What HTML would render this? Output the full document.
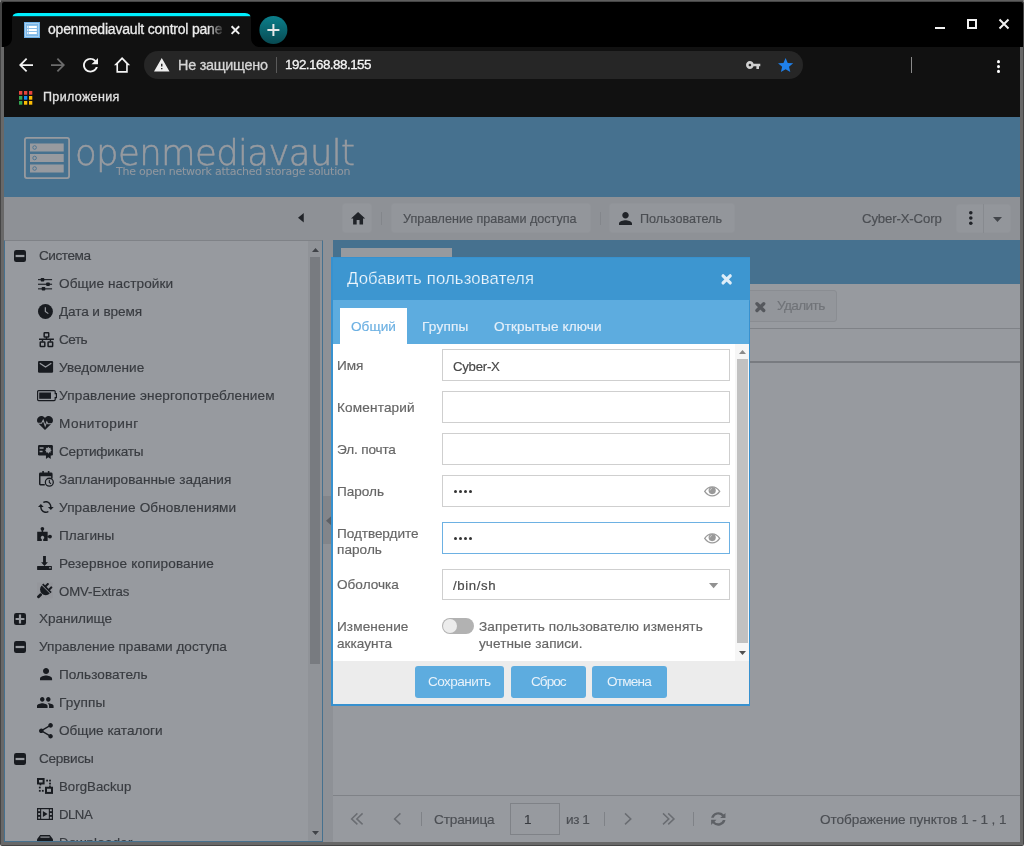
<!DOCTYPE html>
<html lang="ru"><head><meta charset="utf-8"><title>openmediavault control panel</title>
<style>
html,body{margin:0;padding:0;}
body{width:1024px;height:846px;overflow:hidden;position:relative;background:#fff;font-family:"Liberation Sans","DejaVu Sans",sans-serif;font-size:13.6px;color:#404040;}
div{position:absolute;box-sizing:border-box;}
svg{position:absolute;display:block;overflow:visible;}
.t{white-space:nowrap;line-height:20px;height:20px;will-change:transform;-webkit-text-stroke:.18px currentColor;}
.ch{-webkit-text-stroke:.3px currentColor;}
.ml{white-space:nowrap;}

</style></head>
<body>
<div style="left:0px;top:0px;width:1024px;height:846px;background:#454545;border-radius:3px 3px 2px 2px;"></div>
<div style="left:0px;top:0px;width:1024px;height:1px;background:#5e5e5e;border-radius:3px 3px 0 0;"></div>
<div style="left:1px;top:47px;width:1022px;height:798px;background:#686868;"></div>
<div style="left:2px;top:2px;width:1021px;height:45px;background:#000;border-radius:2px 2px 0 0;"></div>
<div style="left:4px;top:47px;width:1016px;height:70px;background:#111;"></div>
<svg style="left:0;top:0" width="300" height="48" viewBox="0 0 300 48"><defs><clipPath id="tabclip"><path d="M3 47 C8 47 12 43.500 12 38 L12 19 Q12 13 18 13 L245 13 Q251 13 251 19 L251 38 C251 43.500 255 47 260 47 Z"/></clipPath><linearGradient id="ntb" x1="0" y1="0" x2="0" y2="1"><stop offset="0" stop-color="#0b7f8b"/><stop offset="1" stop-color="#084a52"/></linearGradient></defs><g clip-path="url(#tabclip)"><rect x="0" y="13" width="300" height="35" fill="#111"/><rect x="0" y="12" width="300" height="4.200" fill="#00f0ff"/></g><circle cx="273.400" cy="30" r="14" fill="url(#ntb)"/><path d="M267.400 30h12M273.400 24v12" stroke="#e8e8e8" stroke-width="2" fill="none"/><path d="M231.600 26.300l7.600 7.600M239.200 26.300l-7.600 7.600" stroke="#f0f0f0" stroke-width="2" fill="none"/></svg>
<svg style="left:24px;top:22px" width="16" height="16" viewBox="0 0 16 16"><rect width="16" height="16" fill="#6eb0e6"/><rect x="1.500" y="1.500" width="13" height="13" fill="none" stroke="#a8d0f0" stroke-width="1"/><rect x="2.500" y="2.500" width="11" height="11" fill="#8cc0ea"/><rect x="3.300" y="4" width="9.500" height="2" fill="#fff"/><rect x="3.300" y="7" width="9.500" height="2" fill="#fff"/><rect x="3.300" y="10" width="9.500" height="2" fill="#fff"/><rect x="4.300" y="4" width=".7" height="2" fill="#8cc0ea"/><rect x="4.300" y="7" width=".7" height="2" fill="#8cc0ea"/><rect x="4.300" y="10" width=".7" height="2" fill="#8cc0ea"/></svg>
<div class="t ch" style="left:48px;top:19.200px;width:174.300px;overflow:hidden;color:#ececec;font-size:14px;letter-spacing:-0.204px;-webkit-mask-image:linear-gradient(to right,#000 160px,transparent 177px);mask-image:linear-gradient(to right,#000 160px,transparent 177px);">openmediavault control panel</div>
<div style="left:935px;top:27px;width:10px;height:2px;background:#f2f2f2;"></div>
<div style="left:967px;top:19px;width:10px;height:10px;border:2px solid #f2f2f2;"></div>
<svg style="left:999px;top:19px" width="10" height="10" viewBox="0 0 10 10"><path d="M.5 .5l9 9M9.500 .5l-9 9" stroke="#f2f2f2" stroke-width="2" fill="none"/></svg>
<svg style="left:19px;top:58px;color:#f4f4f4;" width="14" height="14" viewBox="4 4 16 16" preserveAspectRatio="none" fill="currentColor"><path d="M20 11H7.83l5.59-5.59L12 4l-8 8 8 8 1.41-1.41L7.83 13H20v-2z"/></svg>
<svg style="left:51px;top:58px;color:#6c6c6c;" width="14" height="14" viewBox="4 4 16 16" preserveAspectRatio="none" fill="currentColor"><path d="M12 4l-1.41 1.41L16.17 11H4v2h12.17l-5.58 5.59L12 20l8-8z"/></svg>
<svg style="left:82.5px;top:57.5px;color:#f4f4f4;" width="15" height="14.5" viewBox="4 4 16 16" preserveAspectRatio="none" fill="currentColor"><path d="M17.65 6.35C16.2 4.9 14.21 4 12 4c-4.42 0-7.99 3.58-7.99 8s3.57 8 7.99 8c3.73 0 6.84-2.55 7.73-6h-2.08c-.82 2.33-3.04 4-5.65 4-3.31 0-6-2.69-6-6s2.69-6 6-6c1.66 0 3.14.69 4.22 1.78L13 11h7V4l-2.35 2.35z"/></svg>
<svg style="left:113.8px;top:57px;color:#f4f4f4;" width="16.2" height="15.8" viewBox="2 3 20 17" preserveAspectRatio="none" fill="currentColor"><path d="M12 5.69l5 4.5V18H7v-7.81l5-4.5M12 3L2 12h3v8h14v-8h3L12 3z"/></svg>
<div style="left:144px;top:51px;width:659px;height:28px;background:#262626;border-radius:14px;"></div>
<svg style="left:154px;top:58px;color:#eee;" width="15.5" height="13.5" viewBox="1 2 22 19" preserveAspectRatio="none" fill="currentColor"><path d="M1 21h22L12 2 1 21zm12-3h-2v-2h2v2zm0-4h-2v-4h2v4z"/></svg>
<div class="t ch" style="left:178px;top:55px;color:#d6d6d6;"><span style="font-size:14.4px;letter-spacing:-0.256px;">Не защищено</span></div>
<div style="left:275.5px;top:57px;width:1px;height:16px;background:#5a5a5a;"></div>
<div class="t ch" style="left:285px;top:55px;color:#f6f6f6;"><span style="font-size:13.4px;letter-spacing:-0.507px;">192.168.88.155</span></div>
<svg style="left:746.4px;top:60.5px;color:#d0d0d0;" width="14.3" height="8" viewBox="1 6 22 12" preserveAspectRatio="none" fill="currentColor"><path d="M12.65 10C11.83 7.67 9.61 6 7 6c-3.31 0-6 2.69-6 6s2.69 6 6 6c2.61 0 4.83-1.67 5.65-4H17v4h4v-4h2v-4H12.65zM7 14c-1.1 0-2-.9-2-2s.9-2 2-2 2 .9 2 2-.9 2-2 2z"/></svg>
<svg style="left:778px;top:58px;color:#1f80ea;" width="15.2" height="14" viewBox="2 2 20 19" preserveAspectRatio="none" fill="currentColor"><path d="M12 17.27L18.18 21l-1.64-7.03L22 9.24l-7.19-.61L12 2 9.19 8.63 2 9.24l5.46 4.73L5.82 21z"/></svg>
<div style="left:911px;top:57px;width:1px;height:16px;background:#8a8a8a;"></div>
<svg style="left:997px;top:60px;color:#fff;" width="3" height="13" viewBox="10 4 4 16" preserveAspectRatio="none" fill="currentColor"><circle cx="12" cy="6" r="2"/><circle cx="12" cy="12" r="2"/><circle cx="12" cy="18" r="2"/></svg>
<svg style="left:19px;top:91px" width="13.300" height="13.700" viewBox="0 0 13.300 13.700"><rect x="0" y="0" width="3.300" height="3.700" fill="#e8453c"/><rect x="5" y="0" width="3.300" height="3.700" fill="#e8453c"/><rect x="10" y="0" width="3.300" height="3.700" fill="#e8453c"/><rect x="0" y="5" width="3.300" height="3.700" fill="#34a853"/><rect x="5" y="5" width="3.300" height="3.700" fill="#1a8cf0"/><rect x="10" y="5" width="3.300" height="3.700" fill="#fbbc05"/><rect x="0" y="10" width="3.300" height="3.700" fill="#34a853"/><rect x="5" y="10" width="3.300" height="3.700" fill="#fbbc05"/><rect x="10" y="10" width="3.300" height="3.700" fill="#fbbc05"/></svg>
<div class="t ch" style="left:42.6px;top:87px;color:#e0e0e0;"><span style="font-size:12.5px;letter-spacing:0.346px;">Приложения</span></div><div style="left:4px;top:117px;width:1016px;height:80px;background:#5dacdf;"></div>
<svg style="left:24px;top:136.500px" width="46" height="42" viewBox="0 0 46 42"><rect x=".9" y=".9" width="44.200" height="40.200" rx="2" fill="none" stroke="#fff" stroke-width="1.800"/><rect x="6" y="6.5" width="33.700" height="8" fill="#fff"/><circle cx="10.600" cy="10.5" r="1.800" fill="none" stroke="#5dacdf" stroke-width=".9"/><rect x="6" y="17" width="33.700" height="8" fill="#fff"/><circle cx="10.600" cy="21" r="1.800" fill="none" stroke="#5dacdf" stroke-width=".9"/><rect x="6" y="27.5" width="33.700" height="8" fill="#fff"/><circle cx="10.600" cy="31.5" r="1.800" fill="none" stroke="#5dacdf" stroke-width=".9"/></svg>
<div class="t" style="left:74.800px;top:117.500px;height:70px;line-height:70px;font-family:'DejaVu Sans Light','DejaVu Sans',sans-serif;font-weight:200;font-size:35.500px;color:#fff;letter-spacing:-.64px;-webkit-text-stroke:.45px #fff;">openmediavault</div>
<div class="t" style="left:116px;top:161.500px;font-family:'DejaVu Sans',sans-serif;font-size:11px;letter-spacing:-.24px;color:#fff;opacity:.92;-webkit-text-stroke:0;">The open network attached storage solution</div>
<div style="left:4px;top:197px;width:1016px;height:645px;background:#ececec;"></div>
<svg style="left:298px;top:213px" width="5.800" height="9.600" viewBox="0 0 6 10"><path d="M6 0v10L0 5z" fill="#111"/></svg>
<div style="left:4px;top:240px;width:319px;height:602px;background:#fff;border:1px solid #5dacdf;border-top:1px solid #cfcfcf;"></div>
<div style="left:308px;top:241px;width:14px;height:600px;background:#f1f1f1;"></div>
<div style="left:309.5px;top:256.5px;width:10.5px;height:407px;background:#c1c1c1;"></div>
<svg style="left:311.500px;top:247.500px" width="7" height="4" viewBox="0 0 7 4"><path d="M0 4h7L3.500 0z" fill="#505050"/></svg>
<svg style="left:311.500px;top:830.500px" width="7" height="4" viewBox="0 0 7 4"><path d="M0 0h7L3.500 4z" fill="#505050"/></svg>
<div style="left:4px;top:241px;width:304px;height:600px;overflow:hidden;left:4px;"><div style="left:-4px;top:-241px;width:340px;height:900px"><svg style="left:14.100px;top:249.6px" width="12" height="12" viewBox="0 0 12 12"><rect width="12" height="12" rx="2.200" fill="#000"/><rect x="1.600" y="4.900" width="8.800" height="2.200" fill="#fff"/></svg><div class="t" style="left:39.4px;top:246px;"><span style="font-size:13.6px;letter-spacing:-0.464px;">Система</span></div><svg style="left:37.9px;top:277.9px;color:#000;" width="14.1" height="12.5" viewBox="0 0 14.100 12.500" preserveAspectRatio="none" fill="currentColor"><rect x="0" y="1.100" width="14.100" height="1.100"/><rect x="0" y="5.700" width="14.100" height="1.100"/><rect x="0" y="10.300" width="14.100" height="1.100"/><rect x="2.700" y="0" width="3.600" height="3.400" rx=".7"/><rect x="8.200" y="4.550" width="3.600" height="3.400" rx=".7"/><rect x="3.700" y="9.100" width="3.600" height="3.400" rx=".7"/></svg><div class="t" style="left:59.3px;top:274px;"><span style="font-size:13.6px;letter-spacing:0.091px;">Общие настройки</span></div><svg style="left:38.1px;top:304px;color:#000;" width="14.9" height="14.9" viewBox="0 0 15 15" preserveAspectRatio="none" fill="currentColor"><circle cx="7.500" cy="7.500" r="7.500"/><path d="M7.400 3.200v4.400l3 2.100" fill="none" stroke="#fff" stroke-width="1.200"/></svg><div class="t" style="left:59.3px;top:302px;"><span style="font-size:13.6px;letter-spacing:-0.109px;">Дата и время</span></div><svg style="left:38.9px;top:332.1px;color:#000;" width="14.9" height="15.2" viewBox="0 0 15 15.200" preserveAspectRatio="none" fill="currentColor"><rect x="5.200" y=".75" width="4.600" height="4.200" rx=".5" fill="none" stroke="currentColor" stroke-width="1.500"/><rect x="6.800" y="5" width="1.400" height="2"/><rect x="0" y="6.500" width="15" height="1.500"/><rect x="2.800" y="8" width="1.400" height="1.600"/><rect x="10.800" y="8" width="1.400" height="1.600"/><rect x="1.250" y="10.100" width="4.600" height="4.300" rx=".5" fill="none" stroke="currentColor" stroke-width="1.500"/><rect x="9.150" y="10.100" width="4.600" height="4.300" rx=".5" fill="none" stroke="currentColor" stroke-width="1.500"/></svg><div class="t" style="left:59.3px;top:330px;"><span style="font-size:13.6px;letter-spacing:-0.509px;">Сеть</span></div><svg style="left:38.4px;top:361.1px;color:#000;" width="15.1" height="11.8" viewBox="0 0 15.100 11.800" preserveAspectRatio="none" fill="currentColor"><rect width="15.100" height="11.800" rx="1.200"/><path d="M1.800 2.300l5.750 3.700 5.750-3.700" fill="none" stroke="#fff" stroke-width="1.300"/></svg><div class="t" style="left:59.3px;top:358px;"><span style="font-size:13.6px;letter-spacing:0.009px;">Уведомление</span></div><svg style="left:37px;top:389.7px;color:#000;" width="20" height="11.2" viewBox="0 0 20 11.200" preserveAspectRatio="none" fill="currentColor"><path d="M1.600 .6h15.600a1 1 0 0 1 1 1v2h1.200v4h-1.200v2a1 1 0 0 1-1 1H1.600a1 1 0 0 1-1-1v-8a1 1 0 0 1 1-1z" fill="none" stroke="currentColor" stroke-width="1.200"/><rect x="2.200" y="2.500" width="11.800" height="6.300"/></svg><div class="t" style="left:59.3px;top:386px;"><span style="font-size:13.6px;letter-spacing:0.144px;">Управление энергопотреблением</span></div><svg style="left:37px;top:416px;color:#000;" width="16" height="14" viewBox="0 0 16 14" preserveAspectRatio="none" fill="currentColor"><path d="M8 14L1.100 7.300C-.6 5.400-.3 2.300 1.700 .9 3.700-.5 6.400 0 8 2 9.600 0 12.300-.5 14.300 .9c2 1.400 2.300 4.500.6 6.400z"/><path d="M0 7.300h4.600l1.600-3.200 2 5.800 1.600-4 .9 1.900H16" fill="none" stroke="#fff" stroke-width="1.050"/></svg><div class="t" style="left:59.3px;top:414px;"><span style="font-size:13.6px;letter-spacing:0.431px;">Мониторинг</span></div><svg style="left:38.4px;top:444.5px;color:#000;" width="14.9" height="13.9" viewBox="0 0 15 14" preserveAspectRatio="none" fill="currentColor"><rect width="15" height="10.600" rx="1.200"/><rect x="1.600" y="2.300" width="4" height="1.500" fill="#fff"/><rect x="1.600" y="5.800" width="3" height="1.500" fill="#fff"/><path d="M8 10v4l2.400-1.600 2.400 1.600v-4z"/><path d="M10.40 1.70L11.28 3.08L12.87 2.73L12.52 4.32L13.90 5.20L12.52 6.08L12.87 7.67L11.28 7.32L10.40 8.70L9.52 7.32L7.93 7.67L8.28 6.08L6.90 5.20L8.28 4.32L7.93 2.73L9.52 3.08z" fill="#fff"/></svg><div class="t" style="left:59.3px;top:442px;"><span style="font-size:13.6px;letter-spacing:-0.223px;">Сертификаты</span></div><svg style="left:39.1px;top:471.3px;color:#000;" width="14.9" height="15.9" viewBox="0 0 15 16" preserveAspectRatio="none" fill="currentColor"><path d="M3.300 0h1.600v1.600h4V0h1.600v1.600h1.700a1.500 1.500 0 0 1 1.500 1.500v4.500h-1.500V5.400H1.500v7.700h4.300v1.500H1.500A1.500 1.500 0 0 1 0 13.100v-10a1.500 1.500 0 0 1 1.500-1.500h1.800z"/><circle cx="10.400" cy="11.300" r="4" fill="none" stroke="currentColor" stroke-width="1.300"/><path d="M10.400 8.800v2.700l1.700 1.300" fill="none" stroke="currentColor" stroke-width="1.100"/></svg><div class="t" style="left:59.3px;top:470px;"><span style="font-size:13.6px;letter-spacing:0.042px;">Запланированные задания</span></div><svg style="left:38.1px;top:501px;color:#000;" width="15.7" height="12" viewBox="1 4 22 16" preserveAspectRatio="none" fill="currentColor"><g transform="translate(0 24) scale(1 -1)"><path d="M19 8l-4 4h3c0 3.310-2.690 6-6 6-1.010 0-1.970-.25-2.800-.7l-1.460 1.460C8.970 19.540 10.430 20 12 20c4.420 0 8-3.580 8-8h3l-4-4zM6 12c0-3.310 2.690-6 6-6 1.010 0 1.970.25 2.800.7l1.460-1.460C15.030 4.460 13.570 4 12 4c-4.420 0-8 3.580-8 8H1l4 4 4-4H6z"/></g></svg><div class="t" style="left:59.3px;top:498px;"><span style="font-size:13.6px;letter-spacing:0.118px;">Управление Обновлениями</span></div><svg style="left:37.1px;top:527px;color:#000;" width="14.9" height="13.9" viewBox="0 0 14.900 13.900" preserveAspectRatio="none" fill="currentColor"><path d="M.2 4.800H10.650V13.900H6.200V12.200A1.700 1.700 0 1 0 4.800 12.200V13.900H.2z"/><circle cx="5.400" cy="1.800" r="1.850"/><rect x="4.650" y="2.500" width="1.500" height="2.600"/><circle cx="13" cy="9.600" r="1.900"/><rect x="10.400" y="8.800" width="2" height="1.600"/></svg><div class="t" style="left:59.3px;top:526px;"><span style="font-size:13.6px;letter-spacing:0.044px;">Плагины</span></div><svg style="left:37px;top:555.8px;color:#000;" width="15" height="13.9" viewBox="0 0 15 13.900" preserveAspectRatio="none" fill="currentColor"><path d="M6.070 0h2.830v6.300h2L7.500 9.950 4.100 6.300h1.970z"/><rect x=".1" y="10.100" width="14.800" height="3.800" rx=".3"/><rect x="12" y="11.200" width="2" height="1.200" fill="#fff" opacity=".85"/></svg><div class="t" style="left:59.3px;top:554px;"><span style="font-size:13.6px;letter-spacing:0.162px;">Резервное копирование</span></div><svg style="left:37.1px;top:582.6px;color:#000;" width="15.9" height="15.4" viewBox="0 0 15.900 15.400" preserveAspectRatio="none" fill="currentColor"><rect x="0" y="-.6" width="16" height="16" fill="#c8b8b8" opacity=".13"/><g transform="translate(9.900 5.400) rotate(45)"><rect x="-5.900" y="-.9" width="11.800" height="1.800"/><rect x="-3.400" y="-4.700" width="2" height="4.400" rx=".6"/><rect x="1.400" y="-4.700" width="2" height="4.400" rx=".6"/><path d="M-5.700 1.600H5.700A5.700 5.700 0 0 1-5.700 1.600z"/><rect x="-1.400" y="7.600" width="2.800" height="5.600" rx="1"/></g></svg><div class="t" style="left:59.3px;top:582px;"><span style="font-size:13.2px;letter-spacing:-0.068px;">OMV-Extras</span></div><svg style="left:14.100px;top:612.6px" width="12" height="12" viewBox="0 0 12 12"><rect width="12" height="12" rx="2.200" fill="#000"/><path d="M1.600 4.900h3.300V1.600h2.200v3.300h3.300v2.200H7.100v3.300H4.900V7.100H1.600z" fill="#fff"/></svg><div class="t" style="left:39.4px;top:609px;"><span style="font-size:13.6px;letter-spacing:-0.045px;">Хранилище</span></div><svg style="left:14.100px;top:640.6px" width="12" height="12" viewBox="0 0 12 12"><rect width="12" height="12" rx="2.200" fill="#000"/><rect x="1.600" y="4.900" width="8.800" height="2.200" fill="#fff"/></svg><div class="t" style="left:39.4px;top:637px;"><span style="font-size:13.6px;letter-spacing:0.013px;">Управление правами доступа</span></div><svg style="left:39.9px;top:668.3px;color:#000;" width="12.1" height="12.2" viewBox="4 4 16 16" preserveAspectRatio="none" fill="currentColor"><path d="M12 12c2.21 0 4-1.79 4-4s-1.79-4-4-4-4 1.79-4 4 1.79 4 4 4zm0 2c-2.67 0-8 1.34-8 4v2h16v-2c0-2.66-5.33-4-8-4z"/></svg><div class="t" style="left:59.3px;top:665px;"><span style="font-size:13.6px;letter-spacing:0.032px;">Пользователь</span></div><svg style="left:37.4px;top:697.0999999999999px;color:#000;" width="16.6" height="10.9" viewBox="1 5 22 14" preserveAspectRatio="none" fill="currentColor"><path d="M16 11c1.66 0 2.99-1.34 2.99-3S17.66 5 16 5c-1.66 0-3 1.34-3 3s1.34 3 3 3zm-8 0c1.66 0 2.99-1.34 2.99-3S9.66 5 8 5C6.34 5 5 6.34 5 8s1.34 3 3 3zm0 2c-2.33 0-7 1.17-7 3.5V19h14v-2.500c0-2.33-4.67-3.5-7-3.5zm8 0c-.29 0-.62.02-.97.05 1.16.84 1.97 1.97 1.97 3.45V19h6v-2.5c0-2.33-4.67-3.5-7-3.5z"/></svg><div class="t" style="left:59.3px;top:693px;"><span style="font-size:13.6px;letter-spacing:0.201px;">Группы</span></div><svg style="left:39.1px;top:722.5999999999999px;color:#000;" width="13.9" height="15.5" viewBox="3 2 18 20" preserveAspectRatio="none" fill="currentColor"><path d="M18 16.08c-.76 0-1.44.3-1.96.77L8.910 12.7c.05-.23.09-.46.09-.7s-.04-.47-.09-.7l7.05-4.110c.54.5 1.25.81 2.040.81 1.660 0 3-1.340 3-3s-1.340-3-3-3-3 1.340-3 3c0 .24.040.47.090.7L8.040 9.810C7.500 9.310 6.790 9 6 9c-1.660 0-3 1.340-3 3s1.340 3 3 3c.79 0 1.500-.31 2.040-.81l7.120 4.160c-.05.21-.08.43-.08.65 0 1.610 1.310 2.920 2.920 2.920 1.610 0 2.920-1.310 2.920-2.920s-1.310-2.920-2.920-2.920z"/></svg><div class="t" style="left:59.3px;top:721px;"><span style="font-size:13.6px;letter-spacing:-0.015px;">Общие каталоги</span></div><svg style="left:14.100px;top:752.6px" width="12" height="12" viewBox="0 0 12 12"><rect width="12" height="12" rx="2.200" fill="#000"/><rect x="1.600" y="4.900" width="8.800" height="2.200" fill="#fff"/></svg><div class="t" style="left:39.4px;top:749px;"><span style="font-size:13.6px;letter-spacing:-0.275px;">Сервисы</span></div><svg style="left:37px;top:777.9px;color:#000;" width="16" height="15.9" viewBox="0 0 16 16" preserveAspectRatio="none" fill="currentColor"><rect x="1" y="1" width="5.600" height="4.500" fill="none" stroke="currentColor" stroke-width="2"/><rect x="2.600" y="6" width="1.700" height="1.400"/><rect x="9" y="9.800" width="6" height="5.200" fill="none" stroke="currentColor" stroke-width="2"/><rect x="12.100" y="7.600" width="1.700" height="1.400"/><rect x="9.200" y="1.700" width="1.800" height="1.800"/><rect x="12.100" y="1.700" width="1.800" height="1.800"/><rect x="12.100" y="4.700" width="1.800" height="1.800"/><rect x="1.900" y="8.700" width="1.800" height="1.800"/><rect x="1.900" y="12" width="1.800" height="1.800"/><rect x="4.900" y="12" width="1.800" height="1.800"/></svg><div class="t" style="left:59.3px;top:777px;"><span style="font-size:13.2px;letter-spacing:0.056px;">BorgBackup</span></div><svg style="left:37px;top:807.8px;color:#000;" width="16" height="12" viewBox="0 0 16 12" preserveAspectRatio="none" fill="currentColor"><rect x=".6" y=".6" width="14.800" height="10.800" fill="none" stroke="currentColor" stroke-width="1.200"/><rect x="0" y="0" width="4.200" height="12"/><rect x="11.800" y="0" width="4.200" height="12"/><rect x="1.2" y="1.3" width="1.900" height="1.900" fill="#fff"/><rect x="1.2" y="5.05" width="1.900" height="1.900" fill="#fff"/><rect x="1.2" y="8.8" width="1.900" height="1.900" fill="#fff"/><rect x="12.9" y="1.3" width="1.900" height="1.900" fill="#fff"/><rect x="12.9" y="5.05" width="1.900" height="1.900" fill="#fff"/><rect x="12.9" y="8.8" width="1.900" height="1.900" fill="#fff"/><path d="M5.900 3v6L10.600 6z"/></svg><div class="t" style="left:59.3px;top:805px;"><span style="font-size:13.2px;letter-spacing:-0.497px;">DLNA</span></div><svg style="left:37px;top:834.6999999999999px;color:#000;" width="16" height="14" viewBox="0 0 16 12" preserveAspectRatio="none" fill="currentColor"><path d="M3.200 0h9.600L16 3.600V12H0V3.600z"/><rect x="3.400" y="1.300" width="9.200" height="1" fill="#fff"/><rect x="5" y="5.600" width="6" height="2" fill="#fff"/></svg><div class="t" style="left:59.3px;top:833px;"><span style="font-size:13.2px;letter-spacing:0.333px;">Downloader</span></div></div></div>
<div style="left:342px;top:203.3px;width:30px;height:29.8px;background:#f7f7f7;border:1px solid #f2f2f2;border-radius:3px;"></div>
<svg style="left:351.4px;top:212.3px;color:#111;" width="14.2" height="12.4" viewBox="2 3 20 17" preserveAspectRatio="none" fill="currentColor"><path d="M10 20v-6h4v6h5v-8h3L12 3 2 12h3v8z"/></svg>
<div style="left:381px;top:211.5px;width:1px;height:13.5px;background:#d6d6d6;"></div>
<div style="left:391px;top:203.3px;width:199.5px;height:29.8px;background:#f7f7f7;border:1px solid #f2f2f2;border-radius:3px;"></div>
<div class="t" style="left:403.3px;top:208.5px;color:#666;"><span style="font-size:12.6px;letter-spacing:-0.01px;">Управление правами доступа</span></div>
<div style="left:599.5px;top:211.5px;width:1px;height:13.5px;background:#d6d6d6;"></div>
<div style="left:609px;top:203.3px;width:126px;height:29.8px;background:#f7f7f7;border:1px solid #f2f2f2;border-radius:3px;"></div>
<svg style="left:618.5px;top:212px;color:#111;" width="13" height="13" viewBox="4 4 16 16" preserveAspectRatio="none" fill="currentColor"><path d="M12 12c2.21 0 4-1.79 4-4s-1.79-4-4-4-4 1.79-4 4 1.79 4 4 4zm0 2c-2.67 0-8 1.34-8 4v2h16v-2c0-2.66-5.33-4-8-4z"/></svg>
<div class="t" style="left:640px;top:208.5px;color:#666;"><span style="font-size:12.6px;letter-spacing:0.022px;">Пользователь</span></div>
<div class="t" style="left:862.4px;top:209.3px;color:#666;"><span style="font-size:13.2px;letter-spacing:-0.145px;">Cyber-X-Corp</span></div>
<div style="left:956px;top:203.5px;width:55px;height:29.5px;background:#f7f7f7;border:1px solid #f2f2f2;border-radius:3px;"></div>
<div style="left:983px;top:204px;width:1px;height:28.5px;background:#dedede;"></div>
<svg style="left:969.3px;top:211.3px;color:#111;" width="3.6" height="14" viewBox="10 4 4 16" preserveAspectRatio="none" fill="currentColor"><circle cx="12" cy="6" r="2"/><circle cx="12" cy="12" r="2"/><circle cx="12" cy="18" r="2"/></svg>
<svg style="left:993px;top:216.500px" width="9" height="5" viewBox="0 0 9 5"><path d="M0 0h9L4.500 5z" fill="#555"/></svg>
<div style="left:323.4px;top:496px;width:9.6px;height:48px;background:#d4d4d4;"></div>
<svg style="left:326px;top:515.500px" width="5.500" height="9.400" viewBox="0 0 5.500 9.400"><path d="M5.500 0v9.400L0 4.700z" fill="#8a8a8a"/></svg>
<div style="left:333px;top:240px;width:687px;height:602px;background:#fff;"></div>
<div style="left:333px;top:240px;width:687px;height:44px;background:#5dacdf;"></div>
<div style="left:341px;top:248px;width:111px;height:36px;background:#fff;"></div>
<div style="left:333px;top:328px;width:687px;height:1px;background:#cfcfcf;"></div>
<div style="left:700px;top:290px;width:136.5px;height:31.5px;background:#f6f6f6;border:1px solid #e4e4e4;border-radius:3px;"></div>
<svg style="left:755.200px;top:302px" width="10.700" height="10.200" viewBox="0 0 10 10"><path d="M1.700 1.700l6.600 6.600M8.300 1.700l-6.600 6.600" stroke="#7a7a7a" stroke-width="3.300" stroke-linecap="round" fill="none"/></svg>
<div class="t" style="left:776.5px;top:296px;color:#b0b0b0;"><span style="font-size:13.6px;letter-spacing:-0.615px;">Удалить</span></div>
<div style="left:333px;top:361px;width:687px;height:1.5px;background:#c1c1c1;"></div>
<div style="left:333px;top:795px;width:687px;height:1px;background:#cfcfcf;"></div>
<svg style="left:351.2px;top:813.2px" width="12.2" height="11.8" viewBox="0 0 12.2 11.8"><path d="M6.4 .4L0.6 5.9L6.4 11.4" fill="none" stroke="#a4a4a4" stroke-width="1.500"/><path d="M11.600000000000001 .4L5.8 5.9L11.600000000000001 11.4" fill="none" stroke="#a4a4a4" stroke-width="1.500"/></svg>
<svg style="left:393.9px;top:813.2px" width="7" height="11.8" viewBox="0 0 7 11.8"><path d="M6.4 .4L0.6 5.9L6.4 11.4" fill="none" stroke="#a4a4a4" stroke-width="1.500"/></svg>
<div style="left:421px;top:812px;width:1.2px;height:14px;background:#cfcfcf;"></div>
<div class="t" style="left:434.3px;top:809.5px;color:#666;"><span style="font-size:13.6px;letter-spacing:-0.141px;">Страница</span></div>
<div style="left:510px;top:803px;width:50px;height:32px;background:#fff;border:1px solid #cfcfcf;"></div>
<div class="t" style="left:523.5px;top:810px;color:#404040;"><span style="font-size:13.6px;">1</span></div>
<div class="t" style="left:566.3px;top:809.5px;color:#666;"><span style="font-size:13.6px;letter-spacing:-0.418px;">из 1</span></div>
<div style="left:604px;top:812px;width:1.2px;height:14px;background:#cfcfcf;"></div>
<svg style="left:624.8px;top:813.2px" width="7" height="11.8" viewBox="0 0 7 11.8"><path d="M0 .4L5.800000000000001 5.9L0 11.4" fill="none" stroke="#a4a4a4" stroke-width="1.500"/></svg>
<svg style="left:662.6px;top:813.2px" width="12.2" height="11.8" viewBox="0 0 12.2 11.8"><path d="M0 .4L5.800000000000001 5.9L0 11.4" fill="none" stroke="#a4a4a4" stroke-width="1.500"/><path d="M5.2 .4L11.000000000000002 5.9L5.2 11.4" fill="none" stroke="#a4a4a4" stroke-width="1.500"/></svg>
<div style="left:692.7px;top:812px;width:1.2px;height:14px;background:#cfcfcf;"></div>
<svg style="left:710.6px;top:812.2px;color:#8c8c8c;" width="14.6" height="13.8" viewBox="2 2 12 12" preserveAspectRatio="none" fill="currentColor"><path d="M13.900 2.800 12.500 4.200A6 6 0 0 0 2.100 7h2.100a4 4 0 0 1 6.900-1.400L9.500 7.200h4.400zM2.100 13.200l1.400-1.400A6 6 0 0 0 13.900 9h-2.100a4 4 0 0 1-6.900 1.400l1.600-1.600H2.100z"/></svg>
<div class="t" style="left:819.5px;top:809.5px;color:#666;"><span style="font-size:13.6px;letter-spacing:-0.076px;">Отображение пунктов 1 - 1 , 1</span></div>
<div style="left:4px;top:117px;width:1016px;height:725px;background:rgba(47,53,63,0.5);"></div><div style="left:331.3px;top:256.5px;width:419.2px;height:449px;background:#3791cf;"></div>
<div style="left:332.5px;top:257.5px;width:417px;height:43px;background:#3d96d0;"></div>
<div style="left:333px;top:300px;width:416.4px;height:44px;background:#5dacdf;"></div>
<div style="left:333px;top:344px;width:416.2px;height:317px;background:#fff;"></div>
<div style="left:333px;top:661px;width:416.1px;height:43px;background:#ececec;"></div>
<div class="t" style="left:346.8px;top:268.7px;color:#edf5fc;-webkit-text-stroke:.2px #3d96d0;"><span style="font-size:16.7px;letter-spacing:0.149px;">Добавить пользователя</span></div>
<svg style="left:721px;top:273.600px" width="11.300" height="10.800" viewBox="0 0 10 10"><path d="M1.700 1.700l6.600 6.600M8.300 1.700l-6.600 6.600" stroke="#deedf8" stroke-width="3" stroke-linecap="round" fill="none"/></svg>
<div style="left:340px;top:308px;width:67px;height:36px;background:#fff;"></div>
<div class="t" style="left:351.3px;top:316.8px;color:#6cb0e2;"><span style="font-size:13.6px;letter-spacing:0.033px;">Общий</span></div>
<div class="t" style="left:421.6px;top:316.8px;color:#e4eff9;"><span style="font-size:13.6px;letter-spacing:0.217px;">Группы</span></div>
<div class="t" style="left:493.6px;top:316.8px;color:#e4eff9;"><span style="font-size:13.6px;letter-spacing:0.12px;">Открытые ключи</span></div>
<div style="left:442px;top:349.1px;width:287.7px;height:31.5px;background:#fff;border:1px solid #cfcfcf;"></div>
<div class="t" style="left:336.9px;top:355.7px;color:#666;"><span style="font-size:13.6px;letter-spacing:-0.095px;">Имя</span></div>
<div class="t" style="left:453.4px;top:356.5px;color:#484848;"><span style="font-size:13.2px;letter-spacing:-0.254px;">Cyber-X</span></div>
<div style="left:442px;top:391.1px;width:287.7px;height:31.5px;background:#fff;border:1px solid #cfcfcf;"></div>
<div class="t" style="left:336.9px;top:397.7px;color:#666;"><span style="font-size:13.6px;letter-spacing:0.152px;">Коментарий</span></div>
<div style="left:442px;top:433.1px;width:287.7px;height:31.5px;background:#fff;border:1px solid #cfcfcf;"></div>
<div class="t" style="left:336.9px;top:439.7px;color:#666;"><span style="font-size:13.6px;letter-spacing:-0.151px;">Эл. почта</span></div>
<div style="left:442px;top:475.1px;width:287.7px;height:31.5px;background:#fff;border:1px solid #cfcfcf;"></div>
<div class="t" style="left:336.9px;top:481.7px;color:#666;"><span style="font-size:13.6px;letter-spacing:-0.029px;">Пароль</span></div>
<div style="left:453.9px;top:490.4px;width:3.1px;height:3.1px;background:#333;border-radius:50%;"></div><div style="left:458.9px;top:490.4px;width:3.1px;height:3.1px;background:#333;border-radius:50%;"></div><div style="left:463.9px;top:490.4px;width:3.1px;height:3.1px;background:#333;border-radius:50%;"></div><div style="left:468.9px;top:490.4px;width:3.1px;height:3.1px;background:#333;border-radius:50%;"></div>
<div style="left:442px;top:522.1px;width:287.7px;height:31.5px;background:#fff;border:1px solid #6db1e3;"></div>
<div class="t" style="left:337px;top:523.9px;color:#666;"><span style="font-size:13.6px;letter-spacing:-0.076px;">Подтвердите</span></div>
<div class="t" style="left:337px;top:540.3px;color:#666;"><span style="font-size:13.6px;letter-spacing:0.039px;">пароль</span></div>
<div style="left:453.9px;top:536.9px;width:3.1px;height:3.1px;background:#333;border-radius:50%;"></div><div style="left:458.9px;top:536.9px;width:3.1px;height:3.1px;background:#333;border-radius:50%;"></div><div style="left:463.9px;top:536.9px;width:3.1px;height:3.1px;background:#333;border-radius:50%;"></div><div style="left:468.9px;top:536.9px;width:3.1px;height:3.1px;background:#333;border-radius:50%;"></div>
<div style="left:442px;top:568.9px;width:287.7px;height:31.5px;background:#fff;border:1px solid #cfcfcf;"></div>
<div class="t" style="left:337px;top:575.4px;color:#666;"><span style="font-size:13.6px;letter-spacing:0.005px;">Оболочка</span></div>
<div class="t" style="left:452.7px;top:576.3px;color:#484848;"><span style="font-size:13.2px;letter-spacing:0.62px;">/bin/sh</span></div>
<svg style="left:708.500px;top:582.700px" width="9.200" height="5.300" viewBox="0 0 9 5"><path d="M0 0h9L4.500 5z" fill="#919191"/></svg>
<svg style="left:704.400px;top:486.4px" width="16.400" height="10.600" viewBox="0 0 16.400 10.600"><path d="M.7 5.300C3 1.900 5.600 .8 8.200 .8s5.200 1.100 7.500 4.500c-2.300 3.400-4.900 4.500-7.500 4.500S3 8.700 .7 5.300z" fill="none" stroke="#9a9a9a" stroke-width="1.300"/><circle cx="8.200" cy="4.600" r="3.600" fill="#999"/><path d="M6 4.500A2.300 2.300 0 0 1 8 2.400" fill="none" stroke="#d4d4d4" stroke-width=".8"/></svg>
<svg style="left:704.400px;top:533.2px" width="16.400" height="10.600" viewBox="0 0 16.400 10.600"><path d="M.7 5.300C3 1.900 5.600 .8 8.200 .8s5.200 1.100 7.500 4.500c-2.300 3.400-4.900 4.500-7.500 4.500S3 8.700 .7 5.300z" fill="none" stroke="#9a9a9a" stroke-width="1.300"/><circle cx="8.200" cy="4.600" r="3.600" fill="#999"/><path d="M6 4.500A2.300 2.300 0 0 1 8 2.400" fill="none" stroke="#d4d4d4" stroke-width=".8"/></svg>
<div class="t" style="left:337px;top:617px;color:#666;"><span style="font-size:13.6px;letter-spacing:0.095px;">Изменение</span></div>
<div class="t" style="left:337px;top:633.9px;color:#666;"><span style="font-size:13.6px;letter-spacing:-0.001px;">аккаунта</span></div>
<div style="left:442.3px;top:618.3px;width:31.4px;height:15.8px;background:#b2b2b2;border-radius:8px;"></div>
<div style="left:443.2px;top:619.2px;width:14px;height:14px;background:#ececec;border-radius:50%;"></div>
<div class="t" style="left:479.4px;top:617px;color:#666;"><span style="font-size:13.6px;letter-spacing:0.116px;">Запретить пользователю изменять</span></div>
<div class="t" style="left:479.4px;top:633.9px;color:#666;"><span style="font-size:13.6px;letter-spacing:0.057px;">учетные записи.</span></div>
<div style="left:734.5px;top:344px;width:14.7px;height:317px;background:#f6f6f6;"></div>
<div style="left:736.8px;top:359px;width:11px;height:284px;background:#c1c1c1;"></div>
<svg style="left:739px;top:350.300px" width="7" height="4" viewBox="0 0 7 4"><path d="M0 4h7L3.500 0z" fill="#8a8a8a"/></svg>
<svg style="left:739px;top:650.500px" width="7" height="4" viewBox="0 0 7 4"><path d="M0 0h7L3.500 4z" fill="#505050"/></svg>
<div style="left:415.2px;top:666.4px;width:88.8px;height:32px;background:#5dacdf;border-radius:3px;"></div>
<div class="t" style="left:428.2px;top:672.4px;color:#e8f2fa;-webkit-text-stroke:0;"><span style="font-size:13.6px;letter-spacing:-0.574px;">Сохранить</span></div>
<div style="left:511.2px;top:666.4px;width:74.8px;height:32px;background:#5dacdf;border-radius:3px;"></div>
<div class="t" style="left:531.2px;top:672.4px;color:#e8f2fa;-webkit-text-stroke:0;"><span style="font-size:13.6px;letter-spacing:-0.986px;">Сброс</span></div>
<div style="left:592px;top:666.4px;width:74.7px;height:32px;background:#5dacdf;border-radius:3px;"></div>
<div class="t" style="left:607.4px;top:672.4px;color:#e8f2fa;-webkit-text-stroke:0;"><span style="font-size:13.6px;letter-spacing:-0.814px;">Отмена</span></div>
</body></html>
